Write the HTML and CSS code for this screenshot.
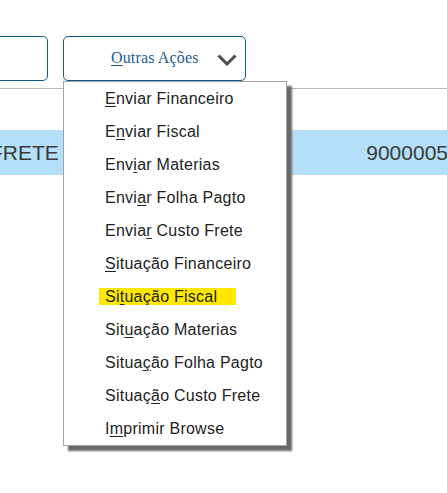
FILE: index.html
```html
<!DOCTYPE html>
<html lang="pt-BR">
<head>
<meta charset="utf-8">
<title>Outras Ações</title>
<link rel="stylesheet" href="styles.css">
</head>
<body>
<div class="toolbar">
  <button class="btn btn-left" type="button"></button>
  <div class="dropdown">
    <button class="btn btn-actions" type="button">
      <span class="btn-label"><u>O</u>utras Ações</span>
      <svg class="chev" width="20" height="12" viewBox="0 0 20 12" aria-hidden="true"><polyline points="1.5,1.5 10,10 18.5,1.5" fill="none" stroke="#4d4d4d" stroke-width="3"/></svg>
    </button>
    <ul class="menu">
      <li class="item"><span><u>E</u>nviar Financeiro</span></li>
      <li class="item"><span>E<u>n</u>viar Fiscal</span></li>
      <li class="item"><span>Env<u>i</u>ar Materias</span></li>
      <li class="item"><span>Envi<u>a</u>r Folha Pagto</span></li>
      <li class="item"><span>Envia<u>r</u> Custo Frete</span></li>
      <li class="item"><span><u>S</u>ituação Financeiro</span></li>
      <li class="item"><span class="hl">Si<u>t</u>uação Fiscal</span></li>
      <li class="item"><span>Sit<u>u</u>ação Materias</span></li>
      <li class="item"><span>Situa<u>ç</u>ão Folha Pagto</span></li>
      <li class="item"><span>Situaç<u>ã</u>o Custo Frete</span></li>
      <li class="item"><span>I<u>m</u>primir Browse</span></li>
    </ul>
  </div>
</div>
<div class="grid">
  <div class="row-empty"></div>
  <div class="row row-selected">
    <span class="cell-left">FRETE</span>
    <span class="cell-right">9000005</span>
  </div>
</div>
</body>
</html>
```
FILE: styles.css
```css
html, body {
  margin: 0;
  padding: 0;
  background: #ffffff;
  overflow: hidden;
}
body {
  width: 447px;
  height: 493px;
  font-family: "Liberation Sans", Arial, sans-serif;
}
.toolbar {
  display: flex;
  align-items: flex-start;
  padding-top: 36px;
}
.btn {
  box-sizing: border-box;
  height: 45px;
  border: 1px solid #0f5a8c;
  border-radius: 5px;
  background: #ffffff;
  padding: 0;
  margin: 0;
}
.btn-left {
  width: 61px;
  margin-left: -13px;
}
.dropdown {
  position: relative;
  margin-left: 15px;
}
.btn-actions {
  width: 183px;
  display: flex;
  align-items: center;
  padding-left: 47px;
  gap: 18px;
  font-family: "Liberation Serif", "Times New Roman", serif;
  font-size: 16px;
  letter-spacing: 0.15px;
  color: #1d5d98;
}
.btn-label {
  white-space: nowrap;
  margin-top: -1px;
}
.btn-label u {
  text-decoration-thickness: 1px;
  text-underline-offset: 2px;
}
.chev {
  display: block;
  margin-top: 2px;
}
.menu {
  position: absolute;
  top: 45px;
  left: 0;
  z-index: 2;
  box-sizing: border-box;
  width: 224px;
  margin: 0;
  padding: 0;
  list-style: none;
  background: #ffffff;
  border: 1px solid #a2a2a2;
  box-shadow: 5px 5px 2px #686868;
}
.item {
  height: 33px;
  display: flex;
  align-items: center;
  padding-left: 41px;
  font-size: 16px;
  letter-spacing: 0.25px;
  color: #222222;
  white-space: nowrap;
}
.item u {
  text-decoration-thickness: 1px;
  text-underline-offset: 2px;
}
.hl {
  box-sizing: border-box;
  width: 137px;
  height: 17px;
  line-height: 17px;
  margin-left: -6px;
  padding-left: 6px;
  background: #ffe800;
}
.grid {
  margin-top: 7px;
  border-top: 1px solid #b9b9b9;
}
.row-empty {
  height: 41px;
}
.row {
  height: 45px;
  display: flex;
  align-items: center;
  justify-content: space-between;
  font-size: 21px;
  color: #3a3a3a;
  white-space: nowrap;
}
.row-selected {
  background: #b3e0f8;
}
.cell-left {
  margin-left: -10px;
}
.cell-right {
  margin-right: -1px;
}
```
